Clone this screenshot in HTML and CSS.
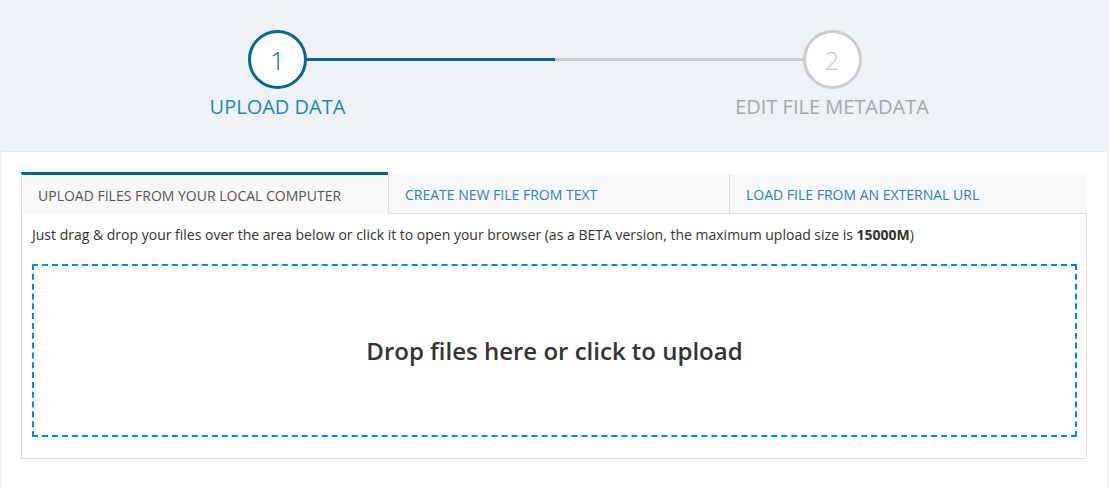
FILE: index.html
```html
<!DOCTYPE html>
<html>
<head>
<meta charset="utf-8">
<link rel="stylesheet" href="styles.css">
</head>
<body>
<div class="stepper">
  <div class="step step-active">
    <div class="circle">1</div>
    <div class="label">UPLOAD DATA</div>
  </div>
  <div class="step step-next">
    <div class="circle">2</div>
    <div class="label">EDIT FILE METADATA</div>
  </div>
</div>
<div class="panel">
  <div class="tabs">
    <div class="tab active">UPLOAD FILES FROM YOUR LOCAL COMPUTER</div>
    <div class="tab">CREATE NEW FILE FROM TEXT</div>
    <div class="tab">LOAD FILE FROM AN EXTERNAL URL</div>
  </div>
  <div class="tab-content">
    <p class="hint">Just drag &amp; drop your files over the area below or click it to open your browser (as a BETA version, the maximum upload size is <b>15000M</b>)</p>
    <div class="dropzone">Drop files here or click to upload</div>
  </div>
</div>
</body>
</html>
```
FILE: styles.css
```css
html, body {
  margin: 0;
  padding: 0;
}
body {
  background: #eef1f6;
  font-family: "Open Sans", "Liberation Sans", sans-serif;
  color: #333;
  height: 100vh;
  overflow: hidden;
  display: flex;
  flex-direction: column;
}
.stepper {
  display: grid;
  grid-template-columns: 555px 1fr;
  height: 151px;
  flex: none;
}
.step {
  position: relative;
  display: flex;
  flex-direction: column;
  align-items: center;
  padding-top: 30px;
}
.step::before {
  content: "";
  position: absolute;
  top: 58px;
  height: 3px;
}
.step-active::before {
  left: 50%;
  right: 0;
  background: #01698f;
}
.step-next::before {
  left: 0;
  right: 50%;
  background: #cccccc;
}
.circle {
  position: relative;
  z-index: 1;
  box-sizing: border-box;
  width: 59px;
  height: 59px;
  border-radius: 50%;
  border: 3px solid #01698f;
  background: #fff;
  display: flex;
  align-items: center;
  justify-content: center;
  font-size: 26px;
  font-weight: 300;
  color: #01698f;
}
.step-next .circle {
  border-color: #cccccc;
  color: #c8c8c8;
}
.label {
  margin-top: 5px;
  font-size: 20px;
  line-height: 26px;
  color: #1a88bf;
  font-weight: 400;
}
.step-next .label {
  color: #a2a9ab;
}
.panel {
  flex: 1;
  min-height: 0;
  overflow: hidden;
  background: #fff;
  margin: 0 2px 0 1px;
  border-top: 1px solid #e3e7ec;
  padding: 20px 20px 0 20px;
}
.tabs {
  display: grid;
  grid-template-columns: 367px 341px 1fr;
  height: 42px;
}
.tab {
  box-sizing: border-box;
  margin-top: 2px;
  background: #f8f8f8;
  border-left: 1px solid #dddddd;
  border-bottom: 1px solid #dddddd;
  padding: 1px 16px 0 16px;
  display: flex;
  align-items: center;
  font-size: 14px;
  color: #2a80c6;
}
.tab.active {
  margin-top: 0;
  border-top: 3px solid #01698f;
  border-bottom: none;
  color: #555;
}
.tab-content {
  border: 1px solid #dddddd;
  border-top: none;
  padding: 11px 9px 21px 10px;
}
.hint {
  margin: 0;
  font-size: 14px;
  line-height: 20px;
  color: #333;
}
.hint b {
  font-weight: 700;
}
.dropzone {
  margin-top: 19px;
  box-sizing: border-box;
  height: 173px;
  border: 2px dashed #0087f7;
  display: flex;
  align-items: center;
  justify-content: center;
  font-size: 24px;
  font-weight: 600;
  color: #333;
}
```
